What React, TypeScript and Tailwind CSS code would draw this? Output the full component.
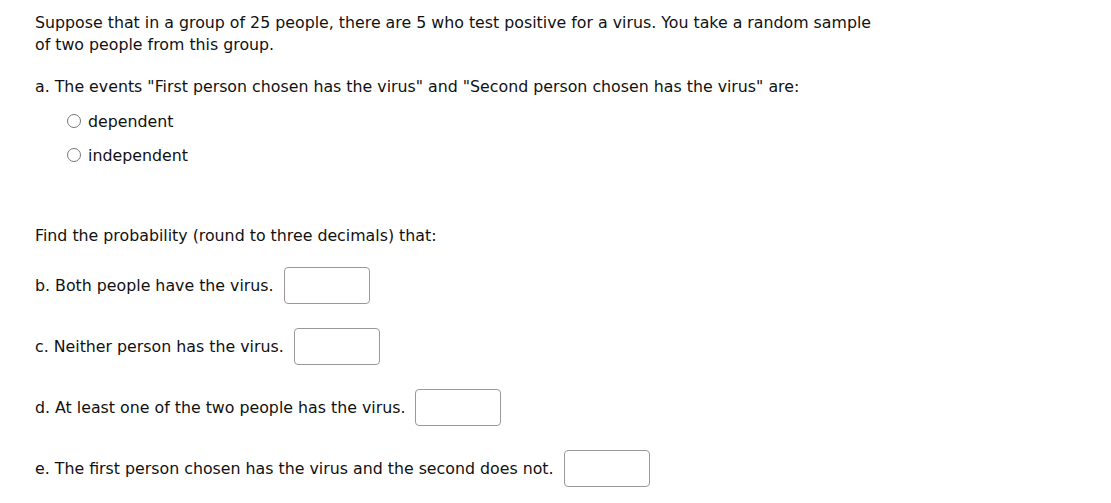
const parts = [
  { id: "b", label: "b. Both people have the virus." },
  { id: "c", label: "c. Neither person has the virus." },
  { id: "d", label: "d. At least one of the two people has the virus." },
  { id: "e", label: "e. The first person chosen has the virus and the second does not." },
];

const Radio = ({ label }: { label: string }) => (
  <label className="flex items-center h-[34px]">
    <span className="w-[14px] h-[14px] rounded-full border border-[#767676] bg-white mr-[7px] -mt-[3px]" />
    <span>{label}</span>
  </label>
);

export default function App() {
  return (
    <div
      className="bg-white text-[#111] text-[15.8px] leading-[22px] pl-[35px] pt-[12px] w-[1111px] h-[503px]"
      style={{ fontFamily: "'DejaVu Sans', sans-serif" }}
    >
      <p className="w-[850px]">
        Suppose that in a group of 25 people, there are 5 who test positive for a virus. You take a random sample
        of two people from this group.
      </p>
      <p className="mt-[20px]">
        a. The events "First person chosen has the virus" and "Second person chosen has the virus" are:
      </p>
      <div className="pl-[32px] mt-[7px]">
        <Radio label="dependent" />
        <Radio label="independent" />
      </div>
      <p className="mt-[52px]">Find the probability (round to three decimals) that:</p>
      <div className="mt-[20px] flex flex-col gap-[24px]">
        {parts.map((p) => (
          <div key={p.id} className="flex items-center">
            <span>{p.label}</span>
            <input
              type="text"
              className="ml-[10px] w-[86px] h-[37px] border border-[#999] rounded-[4px] bg-white outline-none"
            />
          </div>
        ))}
      </div>
    </div>
  );
}
